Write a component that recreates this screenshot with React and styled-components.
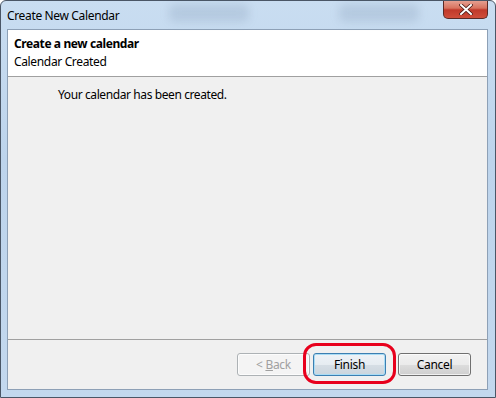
import React from 'react';
import styled, { createGlobalStyle } from 'styled-components';

const GlobalStyle = createGlobalStyle`
  html, body {
    margin: 0;
    padding: 0;
    background: #ffffff;
  }
  * {
    box-sizing: border-box;
  }
`;

const Window = styled.div`
  width: 496px;
  height: 398px;
  display: flex;
  flex-direction: column;
  border: 1px solid #4a5666;
  border-radius: 6px 6px 0 0;
  padding: 0 7px 7px 6px;
  background: linear-gradient(180deg, #c9ddf1 0%, #bdd4ec 40%, #c3d8ee 100%);
  font-family: 'Noto Sans', 'Open Sans', sans-serif;
  font-size: 12px;
  color: #000;
  overflow: hidden;
`;

const TitleBar = styled.div`
  height: 28px;
  display: flex;
  align-items: flex-start;
  justify-content: space-between;
`;

const Title = styled.div`
  padding: 6px 0 0 0;
  font-size: 12px;
  letter-spacing: -0.35px;
  color: #000;
`;

const Spacer = styled.div`
  flex: 1;
`;

const Haze = styled.div`
  display: flex;
  gap: 90px;
  padding-top: 3px;
  margin-right: 24px;
`;

const HazeBlock = styled.div`
  width: 80px;
  height: 18px;
  border-radius: 6px;
  background: rgba(90, 110, 140, 0.16);
  filter: blur(4px);
`;

const CloseButton = styled.div`
  width: 45px;
  height: 19px;
  margin-top: -1px;
  border: 1px solid #5a2a26;
  border-top: none;
  border-radius: 0 0 5px 5px;
  background: linear-gradient(180deg, #e7a597 0%, #d8735f 45%, #c0392a 55%, #cf4d3a 100%);
  display: flex;
  align-items: center;
  justify-content: center;
`;

const Client = styled.div`
  flex: 1;
  display: flex;
  flex-direction: column;
  background: #f0f0f0;
  border: 1px solid #8da0b6;
`;

const Header = styled.div`
  height: 47px;
  background: #ffffff;
  border-bottom: 1px solid #a0a0a0;
  padding: 5px 0 0 6px;
  display: flex;
  flex-direction: column;
  gap: 1px;
`;

const HeaderTitle = styled.div`
  font-weight: 700;
  letter-spacing: -0.4px;
`;

const HeaderSub = styled.div`
  letter-spacing: -0.35px;
`;

const Body = styled.div`
  flex: 1;
  padding: 9px 0 0 50px;
  letter-spacing: -0.4px;
`;

const Footer = styled.div`
  height: 50px;
  border-top: 1px solid #a0a0a0;
  display: flex;
  align-items: flex-start;
  justify-content: flex-end;
  padding: 13px 16px 0 0;
`;

const Button = styled.div`
  width: 73px;
  height: 23px;
  border-radius: 3px;
  display: flex;
  align-items: center;
  justify-content: center;
  letter-spacing: -0.3px;
  margin-left: ${p => p.$gap || 0}px;
  border: 1px solid ${p => (p.$disabled ? '#adb2b5' : p.$default ? '#3c7fb1' : '#707070')};
  color: ${p => (p.$disabled ? '#a0a0a0' : '#000')};
  background: ${p =>
    p.$disabled
      ? '#f4f4f4'
      : p.$default
      ? 'linear-gradient(180deg, #eef3f7 0%, #e6ecf1 50%, #d6dee5 51%, #cbd5dd 100%)'
      : 'linear-gradient(180deg, #f2f2f2 0%, #ebebeb 50%, #dddddd 51%, #cfcfcf 100%)'};
  box-shadow: ${p => (p.$default ? 'inset 0 0 0 1px #a9dcf5' : 'inset 0 0 0 1px rgba(255,255,255,0.7)')};
  position: relative;
`;

const Highlight = styled.div`
  position: absolute;
  left: -11px;
  right: -11px;
  top: -11px;
  bottom: -9px;
  border: 3px solid #e8001c;
  border-radius: 13px;
  pointer-events: none;
`;

const Mnemonic = styled.span`
  text-decoration: underline;
`;

const CloseIcon = () => (
  <svg width="14" height="11" viewBox="0 0 14 11">
    <path
      d="M2 1 L12 10 M12 1 L2 10"
      stroke="#4a1a14"
      strokeWidth="3.6"
      strokeLinecap="square"
      fill="none"
    />
    <path
      d="M2 1 L12 10 M12 1 L2 10"
      stroke="#ffffff"
      strokeWidth="2"
      strokeLinecap="square"
      fill="none"
    />
  </svg>
);

const App = () => {
  return (
    <>
      <GlobalStyle />
      <Window>
        <TitleBar>
          <Title>Create New Calendar</Title>
          <Spacer />
          <Haze>
            <HazeBlock />
            <HazeBlock />
          </Haze>
          <CloseButton>
            <CloseIcon />
          </CloseButton>
        </TitleBar>
        <Client>
          <Header>
            <HeaderTitle>Create a new calendar</HeaderTitle>
            <HeaderSub>Calendar Created</HeaderSub>
          </Header>
          <Body>Your calendar has been created.</Body>
          <Footer>
            <Button $disabled>
              &lt;&nbsp;<Mnemonic>B</Mnemonic>ack
            </Button>
            <Button $default $gap={3}>
              Finish
              <Highlight />
            </Button>
            <Button $gap={12}>Cancel</Button>
          </Footer>
        </Client>
      </Window>
    </>
  );
};

export default App;
